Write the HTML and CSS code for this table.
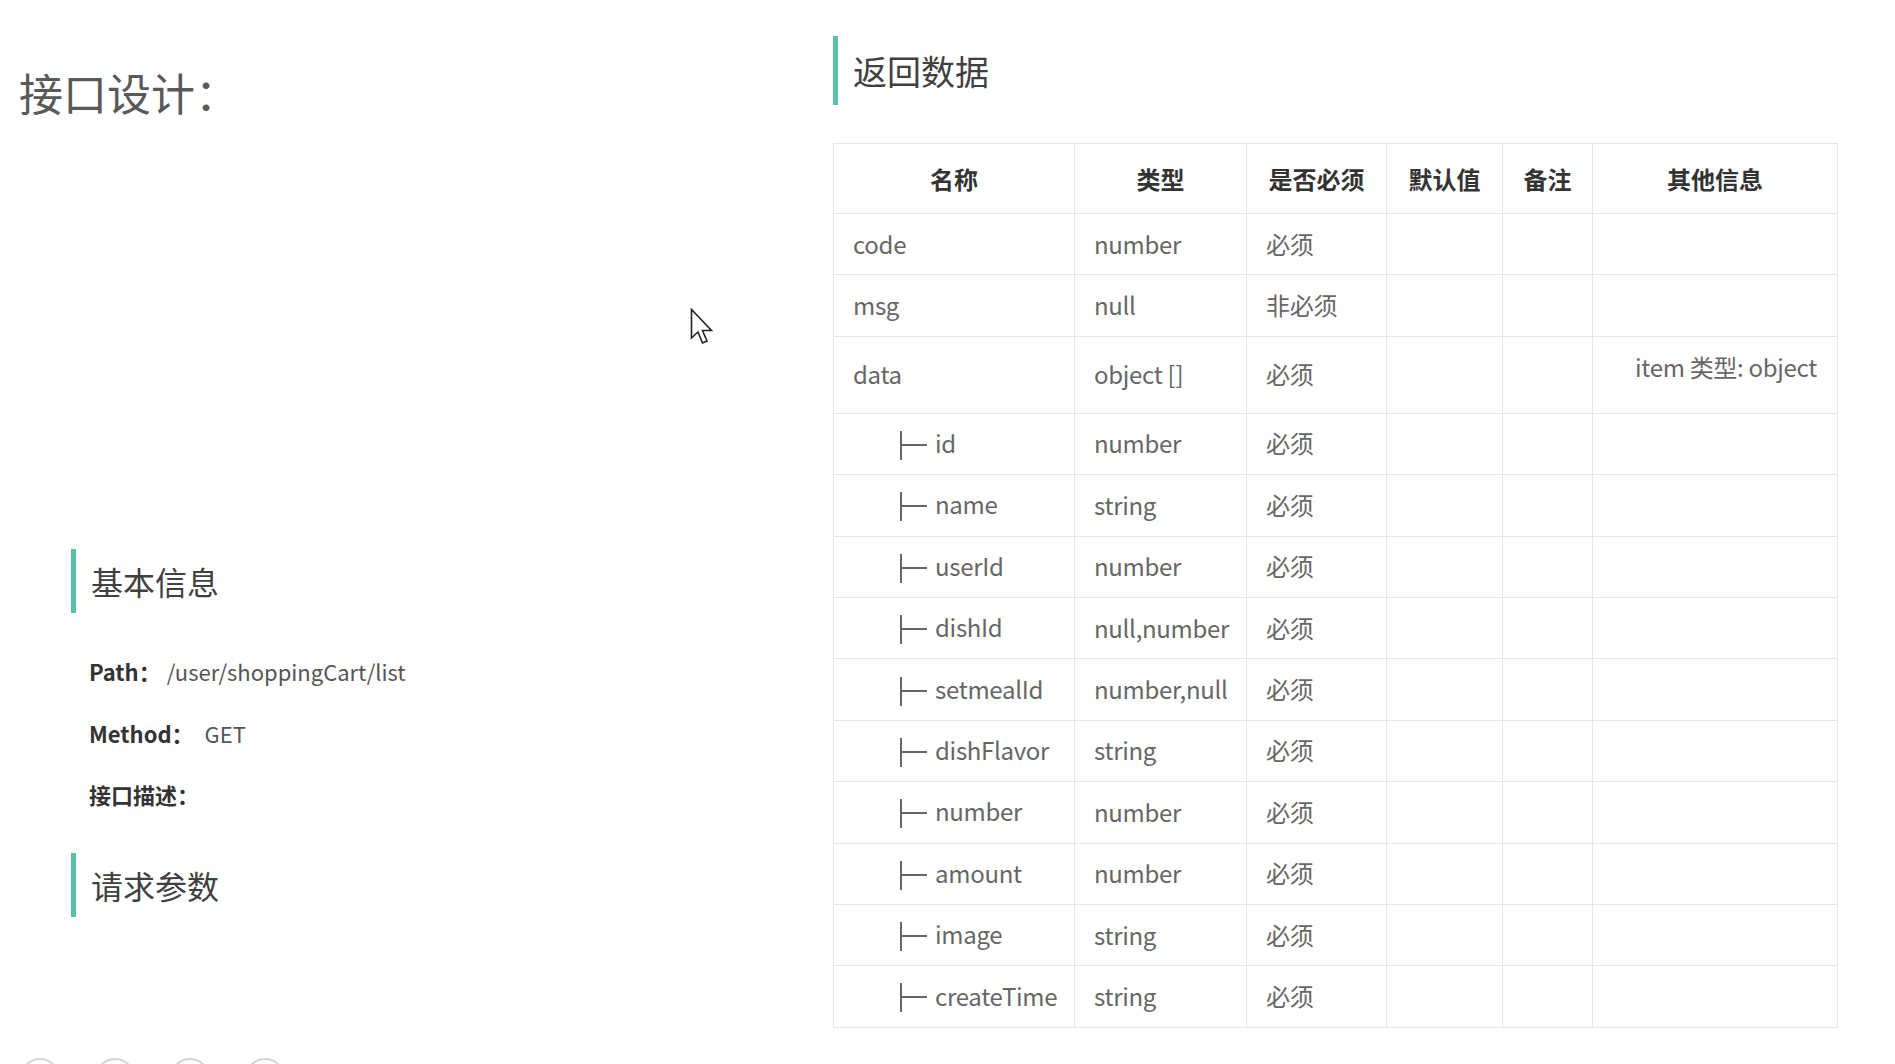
FILE: index.html
```html
<!DOCTYPE html>
<html lang="zh-CN">
<head>
<meta charset="utf-8">
<title>接口设计</title>
<link rel="stylesheet" href="styles.css">
</head>
<body>
<div class="page">
  <div class="left">
    <h1 class="title">接口设计：</h1>
    <div class="sections">
      <h2 class="bar-title">基本信息</h2>
      <div class="info">
        <div class="info-row"><span class="label">Path：</span><span class="value">/user/shoppingCart/list</span></div>
        <div class="info-row"><span class="label">Method：</span><span class="value method">GET</span></div>
        <div class="info-row"><span class="label">接口描述：</span></div>
      </div>
      <h2 class="bar-title second">请求参数</h2>
    </div>
    <div class="circles">
      <span class="circle"></span><span class="circle"></span><span class="circle"></span><span class="circle"></span>
    </div>
  </div>
  <div class="right">
    <h2 class="bar-title return">返回数据</h2>
    <table class="data-table">
      <colgroup>
        <col class="c1"><col class="c2"><col class="c3"><col class="c4"><col class="c5"><col class="c6">
      </colgroup>
      <thead>
        <tr><th>名称</th><th>类型</th><th>是否必须</th><th>默认值</th><th>备注</th><th>其他信息</th></tr>
      </thead>
      <tbody>
        <tr><td>code</td><td>number</td><td>必须</td><td></td><td></td><td></td></tr>
        <tr><td>msg</td><td>null</td><td>非必须</td><td></td><td></td><td></td></tr>
        <tr class="tall"><td>data</td><td>object []</td><td>必须</td><td></td><td></td><td class="other">item 类型: object</td></tr>
        <tr><td><span class="tree"></span>id</td><td>number</td><td>必须</td><td></td><td></td><td></td></tr>
        <tr><td><span class="tree"></span>name</td><td>string</td><td>必须</td><td></td><td></td><td></td></tr>
        <tr><td><span class="tree"></span>userId</td><td>number</td><td>必须</td><td></td><td></td><td></td></tr>
        <tr><td><span class="tree"></span>dishId</td><td>null,number</td><td>必须</td><td></td><td></td><td></td></tr>
        <tr><td><span class="tree"></span>setmealId</td><td>number,null</td><td>必须</td><td></td><td></td><td></td></tr>
        <tr><td><span class="tree"></span>dishFlavor</td><td>string</td><td>必须</td><td></td><td></td><td></td></tr>
        <tr><td><span class="tree"></span>number</td><td>number</td><td>必须</td><td></td><td></td><td></td></tr>
        <tr><td><span class="tree"></span>amount</td><td>number</td><td>必须</td><td></td><td></td><td></td></tr>
        <tr><td><span class="tree"></span>image</td><td>string</td><td>必须</td><td></td><td></td><td></td></tr>
        <tr><td><span class="tree"></span>createTime</td><td>string</td><td>必须</td><td></td><td></td><td></td></tr>
      </tbody>
    </table>
  </div>
  <svg class="cursor" width="24" height="38" viewBox="0 0 24 38">
    <path d="M1.5 1.5 L1.5 30 L8 24 L12.5 35 L17 33 L12.5 22.5 L21.5 22.5 Z" fill="#fff" stroke="#222" stroke-width="1.6" stroke-linejoin="miter"/>
  </svg>
</div>
</body>
</html>
```

FILE: styles.css
```css
* { box-sizing: border-box; }
html, body {
  margin: 0;
  padding: 0;
  background: #fff;
}
body {
  font-family: "Noto Sans CJK SC", "Noto Sans", sans-serif;
  color: #333;
  width: 1895px;
  height: 1064px;
  overflow: hidden;
}
.page {
  position: relative;
  display: flex;
  height: 1064px;
}
.left {
  width: 833px;
  flex: none;
  display: flex;
  flex-direction: column;
}
.title {
  margin: 62px 0 0 19px;
  font-size: 44px;
  line-height: 60px;
  font-weight: 400;
  color: #595959;
}
.sections {
  margin: 427px 0 0 71px;
}
.bar-title {
  margin: 0;
  border-left: 5px solid #5cbfa8;
  font-size: 32px;
  line-height: 64px;
  height: 64px;
  font-weight: 400;
  color: #404040;
  padding-left: 15px;
}
.info {
  padding: 28px 0 0 18px;
}
.info-row {
  height: 61.5px;
  line-height: 61.5px;
  font-size: 22px;
  display: flex;
}
.label {
  font-weight: 700;
  color: #333;
}
.value {
  color: #555;
  margin-left: 6px;
}
.value.method {
  margin-left: 11px;
}
.bar-title.second {
  margin-top: 27px;
}
.circles {
  margin-top: auto;
  display: flex;
  gap: 35px;
  padding-left: 20px;
  height: 6px;
  overflow: hidden;
}
.circle {
  width: 40px;
  height: 40px;
  border-radius: 50%;
  border: 2px solid #d4d4d4;
  flex: none;
}
.right {
  flex: none;
  width: 1004px;
  padding-top: 36px;
}
.bar-title.return {
  height: 69px;
  line-height: 69px;
  font-size: 34px;
  padding-left: 15px;
  color: #404040;
}
.data-table {
  margin-top: 38px;
  width: 1004px;
  table-layout: fixed;
  border-collapse: collapse;
  font-size: 24px;
  color: #666;
}
.c1 { width: 241px; }
.c2 { width: 172px; }
.c3 { width: 140px; }
.c4 { width: 116px; }
.c5 { width: 90px; }
.c6 { width: 245px; }
.data-table th,
.data-table td {
  border: 1px solid #e6e6e6;
  vertical-align: middle;
  white-space: nowrap;
}
.data-table th {
  height: 70px;
  font-weight: 700;
  color: #333;
  text-align: center;
  font-size: 24px;
}
.data-table td {
  height: 61.4px;
  padding: 0 0 2px 19px;
  text-align: left;
  letter-spacing: -0.3px;
}
.data-table tr.tall td {
  height: 77px;
}
.data-table td.other {
  vertical-align: top;
  padding: 12px 20px 0 0;
  text-align: right;
  color: #666;
}
.tree {
  display: inline-block;
  position: relative;
  width: 28px;
  height: 29px;
  margin-left: 47px;
  margin-right: 7px;
  vertical-align: middle;
  border-left: 2px solid #666;
  top: -1px;
}
.tree::after {
  content: "";
  position: absolute;
  left: 0;
  top: 13px;
  width: 25px;
  height: 2px;
  background: #666;
}
.cursor {
  position: absolute;
  left: 690px;
  top: 308px;
}
```
